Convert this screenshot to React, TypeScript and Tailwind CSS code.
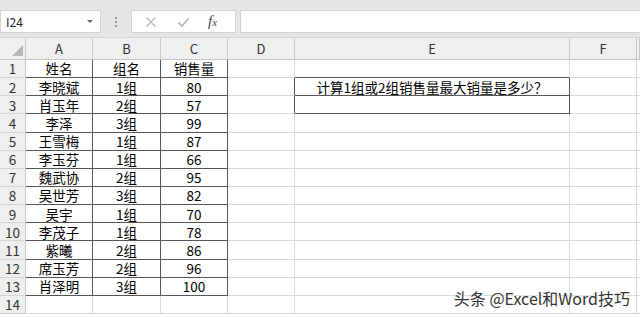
const rows: [string, string, string][] = [
  ["姓名", "组名", "销售量"],
  ["李晓斌", "1组", "80"],
  ["肖玉年", "2组", "57"],
  ["李泽", "3组", "99"],
  ["王雪梅", "1组", "87"],
  ["李玉芬", "1组", "66"],
  ["魏武协", "2组", "95"],
  ["吴世芳", "3组", "82"],
  ["吴宇", "1组", "70"],
  ["李茂子", "1组", "78"],
  ["紫曦", "2组", "86"],
  ["席玉芳", "2组", "96"],
  ["肖泽明", "3组", "100"],
  ["", "", ""],
];

const font = { fontFamily: '"Noto Sans CJK SC", "Liberation Sans", sans-serif' };

function Toolbar() {
  return (
    <div className="h-[37px] bg-[#e6e6e6] flex items-start pt-[10px]">
      <div className="w-[101px] h-[23px] bg-white border border-[#d4d4d4] flex items-center justify-between pl-[5px] pr-[7px] text-[12px] text-[#222]">
        <span>I24</span>
        <span className="w-0 h-0 border-l-[3px] border-r-[3px] border-t-[3px] border-l-transparent border-r-transparent border-t-[#666]" />
      </div>
      <div className="w-[30px] h-[23px] flex flex-col items-center justify-center gap-[2px]">
        <span className="w-[2px] h-[2px] bg-[#999]" />
        <span className="w-[2px] h-[2px] bg-[#999]" />
        <span className="w-[2px] h-[2px] bg-[#999]" />
      </div>
      <div className="w-[105px] h-[23px] bg-white border border-[#d4d4d4] flex items-center">
        <svg width="12" height="12" viewBox="0 0 12 12" className="ml-[13px]">
          <path d="M1.5 1.5 L10.5 10.5 M10.5 1.5 L1.5 10.5" stroke="#b5b5b5" strokeWidth="1.2" fill="none" />
        </svg>
        <svg width="13" height="12" viewBox="0 0 13 12" className="ml-[20px]">
          <path d="M1.5 6.5 L5 10 L11.5 2.5" stroke="#b5b5b5" strokeWidth="1.6" fill="none" />
        </svg>
        <span
          className="ml-[18px] text-[15px] italic text-[#444]"
          style={{ fontFamily: '"Liberation Serif", serif' }}
        >
          f<span className="text-[11px]">x</span>
        </span>
      </div>
      <div className="ml-[4px] flex-1 h-[23px] bg-white border-y border-l border-[#d4d4d4]" />
    </div>
  );
}

const widths = ["w-[26px]", "w-[67px]", "w-[68px]", "w-[67px]", "w-[67px]", "w-[275px]", "w-[67px]", "flex-1"];
const letters = ["", "A", "B", "C", "D", "E", "F", ""];

export default function App() {
  return (
    <div className="w-[640px] h-[317px] overflow-hidden bg-white relative" style={font}>
      <Toolbar />
      <div className="flex h-[23px] bg-[#efefef] border-t border-[#d6d6d6]">
        {letters.map((l, i) => (
          <div
            key={i}
            className={`${widths[i]} shrink-0 border-r border-b border-[#c6c6c6] flex items-center justify-center text-[13px] text-[#333]`}
          >
            {i === 0 ? (
              <span className="w-0 h-0 self-end mb-[3px] ml-[10px] border-l-[11px] border-b-[11px] border-l-transparent border-b-[#b8b8b8]" />
            ) : (
              l
            )}
          </div>
        ))}
      </div>
      {rows.map((r, ri) => {
        const n = ri + 1;
        const inTable = n <= 13;
        return (
          <div key={ri} className="flex h-[18.15px] text-[13.5px] text-black">
            <div
              className={`w-[26px] shrink-0 bg-[#efefef] border-r border-b border-r-[#c6c6c6] border-b-[#d4d4d4] flex items-center justify-center text-[13.5px] text-[#333] ${
                inTable ? "border-r-[#555]" : ""
              }`}
            >
              {n}
            </div>
            {r.map((c, ci) => (
              <div
                key={ci}
                className={`${widths[ci + 1]} shrink-0 border-r border-b flex items-center justify-center ${
                  inTable ? "border-[#555]" : "border-[#dadada]"
                }`}
              >
                {c}
              </div>
            ))}
            <div
              className={`w-[67px] shrink-0 border-r border-b border-[#dadada] ${
                n === 2 || n === 3 ? "border-r-[#555]" : ""
              }`}
            />
            <div
              className={`w-[275px] shrink-0 border-r border-b border-[#dadada] flex items-center justify-center ${
                n === 1 || n === 2 || n === 3 ? "border-b-[#555]" : ""
              } ${n === 2 || n === 3 ? "border-r-[#555]" : ""}`}
            >
              {n === 2 ? "计算1组或2组销售量最大销量是多少？" : ""}
            </div>
            <div className="w-[67px] shrink-0 border-r border-b border-[#dadada]" />
            <div className="flex-1 border-b border-[#dadada]" />
          </div>
        );
      })}
      <div
        className="absolute right-[10px] bottom-[7px] text-[16px] text-[#333]"
        style={{ textShadow: "0 0 2px #fff, 0 0 2px #fff" }}
      >
        头条 @Excel和Word技巧
      </div>
    </div>
  );
}
